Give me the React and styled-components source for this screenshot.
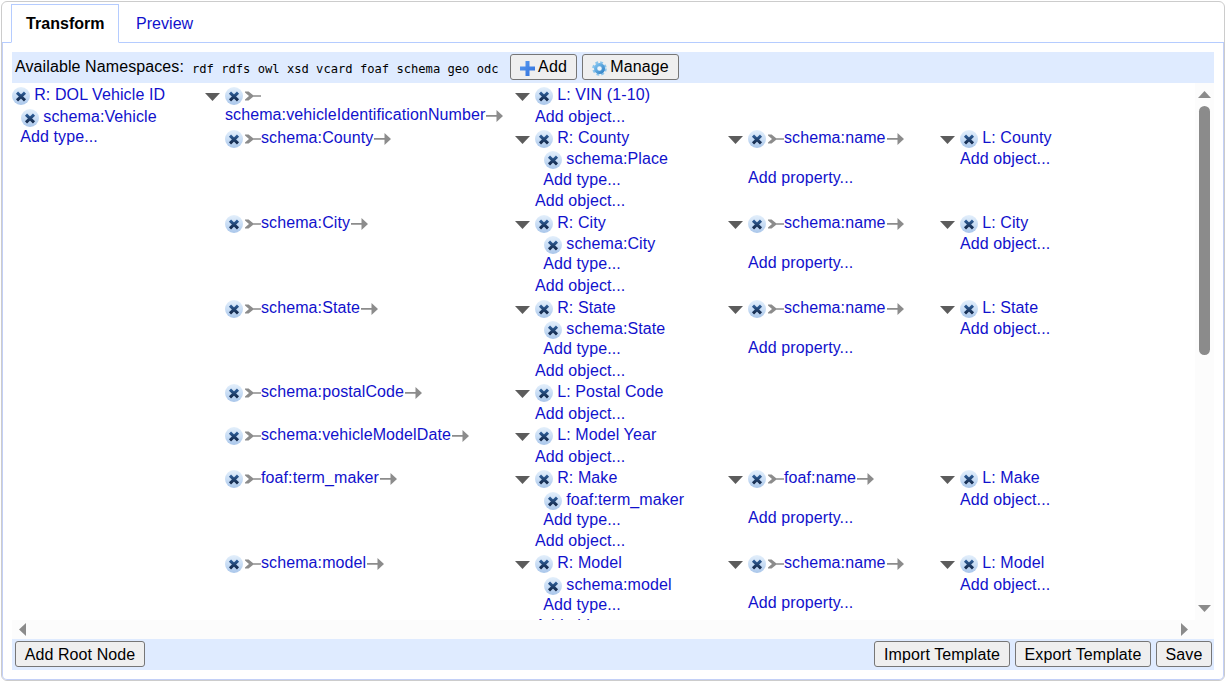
import React from "react";
import styled, { createGlobalStyle, css } from "styled-components";

const Global = createGlobalStyle`
  body { margin: 0; background: #fff; font: 16px/18px "Liberation Sans", Arial, sans-serif; letter-spacing: 0.1px; color: #000; overflow: hidden; }
  * { box-sizing: border-box; }
`;

const Frame = styled.div`
  margin: 1px 2px 0 1px;
  width: 1224px;
  height: 680px;
  border: 1px solid #ccc;
  border-radius: 6px;
  display: flex;
  flex-direction: column;
`;
const Tabs = styled.nav`
  display: flex;
  height: 41px;
  flex: none;
  padding: 2px 0 0 9px;
  border-bottom: 1px solid #b5ccff;
`;
const Tab = styled.a`
  height: 39px;
  padding: 10px 14px 0;
  border: 1px solid transparent;
  color: #1111cc;
  letter-spacing: 0.04px;
  ${(p) => p.$active && css`
    width: 108px;
    border-color: #b5ccff;
    border-bottom-color: #fff;
    background: #fff;
    color: #000;
    font-weight: bold;
    font-size: 16px;
  `}
  & + & { padding-left: 16px; }
`;
const Panel = styled.main`
  flex: 1;
  min-height: 0;
  padding: 9px;
  border: 1px solid #c3d0f7;
  border-top: 0;
  border-radius: 0 0 5px 5px;
  display: flex;
  flex-direction: column;
`;
const Bar = styled.div`
  height: 31px;
  flex: none;
  display: flex;
  align-items: center;
  gap: 5px;
  padding: 0 2px 1px 3px;
  background: #dfebff;
  white-space: pre;
`;
const Label = styled.span`
  height: 18px;
  width: 169px;
`;
const Namespaces = styled.span`
  width: 307px;
  font: 12.13px/18px "DejaVu Sans Mono", monospace;
  letter-spacing: 0;
  margin: 3px 6px 0 3px;
`;
const Spacer = styled.div`flex: 1;`;
const Button = styled.button`
  height: 26px;
  width: ${(p) => p.$w}px;
  padding: ${(p) => (p.$low ? "1px 0 0" : 0)};
  border: 1px solid #767676;
  border-radius: 3px;
  background: #efefef;
  font: inherit;
  letter-spacing: inherit;
  color: #000;
  display: flex;
  align-items: center;
  justify-content: center;
  svg { margin: 3px 3px 0 0; }
`;

const Scroller = styled.section`
  flex: 1;
  min-height: 0;
  display: grid;
  grid-template-columns: 1fr 19px;
  grid-template-rows: 1fr 19px;
`;
const Viewport = styled.div`
  overflow: hidden;
  display: flex;
  align-items: flex-start;
  padding-top: 2px;
  color: #1111cc;
  white-space: nowrap;
`;
const VTrack = styled.div`
  background: #fcfcfc;
  display: flex;
  flex-direction: column;
  align-items: center;
  padding: 8px 0;
`;
const HTrack = styled.div`
  background: #fcfcfc;
  display: flex;
  align-items: center;
  justify-content: space-between;
  padding: 0 7px;
`;
const Corner = styled.div`background: #fcfcfc;`;
const Thumb = styled.div`
  width: 11px;
  height: 249px;
  margin: 8px 0 auto;
  border-radius: 6px;
  background: #8b8b8b;
`;

const RootCell = styled.div`width: 193px; flex: none;`;
const Branches = styled.div`flex: none;`;
const Row = styled.div`
  display: flex;
  height: ${(p) => p.$h}px;
`;
const Cell = styled.div`
  width: ${(p) => p.$w}px;
  flex: none;
  display: flex;
`;
const Toggle = styled.span`
  width: 20px;
  flex: none;
  padding-top: 8px;
  line-height: 0;
`;
const Line = styled.div`
  display: flex;
  height: ${(p) => p.$h || 21.4}px;
  padding-left: ${(p) => p.$indent || 0}px;
`;
const Text = styled.span`
  height: 18px;
  padding-top: 1px;
  margin-left: ${(p) => p.$gap || 0}px;
`;

const Icon = styled.svg`
  flex: none;
  display: block;
  margin-top: ${(p) => p.$top || 0}px;
  margin-left: ${(p) => p.$left || 0}px;
`;

const Close = () => (
  <Icon width="18" height="18" viewBox="0 0 18 18" $top={2}>
    <circle cx="9" cy="9" r="9" fill="url(#ball)" />
    <path d="M5 5.7L13 13.3M13 5.7L5 13.3" stroke="url(#cross)" strokeWidth="3" />
  </Icon>
);
const Tail = () => (
  <Icon width="16" height="10" viewBox="0 0 16 10" $top={6} $left={2}>
    <path d="M0 .5H3.6L8.2 4.2H16V5.8H8.2L3.6 9.5H0V8.6L4 5L0 1.4z" fill="#8c8c8c" />
  </Icon>
);
const Head = () => (
  <Icon width="17" height="12" viewBox="0 0 17 12" $top={5} $left={1}>
    <path d="M0 5H10.5V0L17 6L10.5 12V6.8H0z" fill="#8c8c8c" />
  </Icon>
);
const Down = () => (
  <svg width="15" height="8" viewBox="0 0 15 8"><path d="M0 0H15L7.5 8z" fill="#5c5c5c" /></svg>
);
const Arrow = ({ d, w, h }) => (
  <svg width={w} height={h} viewBox={`0 0 ${w} ${h}`}><path d={d} fill="#8b8b8b" /></svg>
);
const Plus = () => (
  <svg width="15" height="15" viewBox="0 0 15 15">
    <path d="M5.5 0H9.5V5.5H15V9.5H9.5V15H5.5V9.5H0V5.5H5.5z" fill="url(#plus)" />
  </svg>
);
const Gear = () => (
  <svg width="15" height="15" viewBox="0 0 15 15">
    <circle cx="7.5" cy="7.5" r="6" fill="none" stroke="#8cc5ec" strokeWidth="2.6" strokeDasharray="2.7 2.01" />
    <circle cx="7.5" cy="7.5" r="3.9" fill="#eef5fb" stroke="url(#gear)" strokeWidth="3.2" />
  </svg>
);
const Defs = () => (
  <svg width="0" height="0" style={{ position: "absolute" }}>
    <linearGradient id="ball" x1="0" y1="0" x2="0" y2="1">
      <stop offset="0" stopColor="#e3effb" />
      <stop offset=".5" stopColor="#cadef5" />
      <stop offset="1" stopColor="#a9c6ea" />
    </linearGradient>
    <linearGradient id="cross" x1="0" y1="0" x2="0" y2="1">
      <stop offset="0" stopColor="#2d5c96" />
      <stop offset="1" stopColor="#152a4c" />
    </linearGradient>
    <linearGradient id="plus" x1="0" y1="0" x2="1" y2="1">
      <stop offset="0" stopColor="#5b9df0" />
      <stop offset="1" stopColor="#2f6fdc" />
    </linearGradient>
    <linearGradient id="gear" x1="0" y1="0" x2="1" y2="1">
      <stop offset="0" stopColor="#7dc0ee" />
      <stop offset="1" stopColor="#3585c8" />
    </linearGradient>
  </svg>
);

const Resource = ({ label, type }) => (
  <>
    <Line $h={21.7}><Close /><Text $gap={4.2}>{label}</Text></Line>
    {type && (
      <>
        <Line $h={20.1} $indent={8.8}><Close /><Text $gap={4.5}>{type}</Text></Line>
        <Line $h={21.4} $indent={8.2}><Text>Add type...</Text></Line>
      </>
    )}
  </>
);
const ObjectCell = ({ label, type }) => (
  <Cell $w={type ? 213 : 250}>
    <Toggle><Down /></Toggle>
    <div>
      <Resource label={label} type={type} />
      <Line><Text>Add object...</Text></Line>
    </div>
  </Cell>
);
const PropertyCell = ({ name, width, toggle, wrap, add }) => (
  <Cell $w={width}>
    <Toggle>{toggle && <Down />}</Toggle>
    <div>
      <Line $h={wrap ? 20 : add ? 40.4 : 21.6}>
        <Close /><Tail />
        {!wrap && <><Text>{name}</Text><Head /></>}
      </Line>
      {wrap && <Line><Text>{name}</Text><Head /></Line>}
      {add && <Line><Text>Add property...</Text></Line>}
    </div>
  </Cell>
);

const rows = [
  { prop: "schema:vehicleIdentificationNumber", label: "L: VIN (1-10)", wrap: true },
  { prop: "schema:County", label: "R: County", type: "schema:Place", sub: "schema:name", leaf: "L: County" },
  { prop: "schema:City", label: "R: City", type: "schema:City", sub: "schema:name", leaf: "L: City" },
  { prop: "schema:State", label: "R: State", type: "schema:State", sub: "schema:name", leaf: "L: State" },
  { prop: "schema:postalCode", label: "L: Postal Code" },
  { prop: "schema:vehicleModelDate", label: "L: Model Year" },
  { prop: "foaf:term_maker", label: "R: Make", type: "foaf:term_maker", sub: "foaf:name", leaf: "L: Make" },
  { prop: "schema:model", label: "R: Model", type: "schema:model", sub: "schema:name", leaf: "L: Model" },
];

export default function App() {
  return (
    <>
      <Global />
      <Defs />
      <Frame>
        <Tabs>
          <Tab $active>Transform</Tab>
          <Tab>Preview</Tab>
        </Tabs>
        <Panel>
          <Bar>
            <Label>Available Namespaces:</Label>
            <Namespaces>rdf rdfs owl xsd vcard foaf schema geo odc</Namespaces>
            <Button $w={67}><Plus />Add</Button>
            <Button $w={97}><Gear />Manage</Button>
          </Bar>
          <Scroller>
            <Viewport>
              <RootCell><Resource label="R: DOL Vehicle ID" type="schema:Vehicle" /></RootCell>
              <Branches>
                {rows.map((r, i) => (
                  <Row key={r.prop} $h={r.type ? 84.9 : 42.8}>
                    <PropertyCell name={r.prop} width={310} toggle={i === 0} wrap={r.wrap} />
                    <ObjectCell label={r.label} type={r.type} />
                    {r.sub && <PropertyCell name={r.sub} width={212} toggle add />}
                    {r.sub && <ObjectCell label={r.leaf} />}
                  </Row>
                ))}
              </Branches>
            </Viewport>
            <VTrack>
              <Arrow w={13} h={7} d="M0 7L6.5 0L13 7z" />
              <Thumb />
              <Arrow w={13} h={7} d="M0 0H13L6.5 7z" />
            </VTrack>
            <HTrack>
              <Arrow w={7} h={13} d="M7 0V13L0 6.5z" />
              <Arrow w={7} h={13} d="M0 0V13L7 6.5z" />
            </HTrack>
            <Corner />
          </Scroller>
          <Bar>
            <Button $low $w={130}>Add Root Node</Button>
            <Spacer />
            <Button $low $w={136}>Import Template</Button>
            <Button $low $w={136}>Export Template</Button>
            <Button $low $w={56}>Save</Button>
          </Bar>
        </Panel>
      </Frame>
    </>
  );
}
